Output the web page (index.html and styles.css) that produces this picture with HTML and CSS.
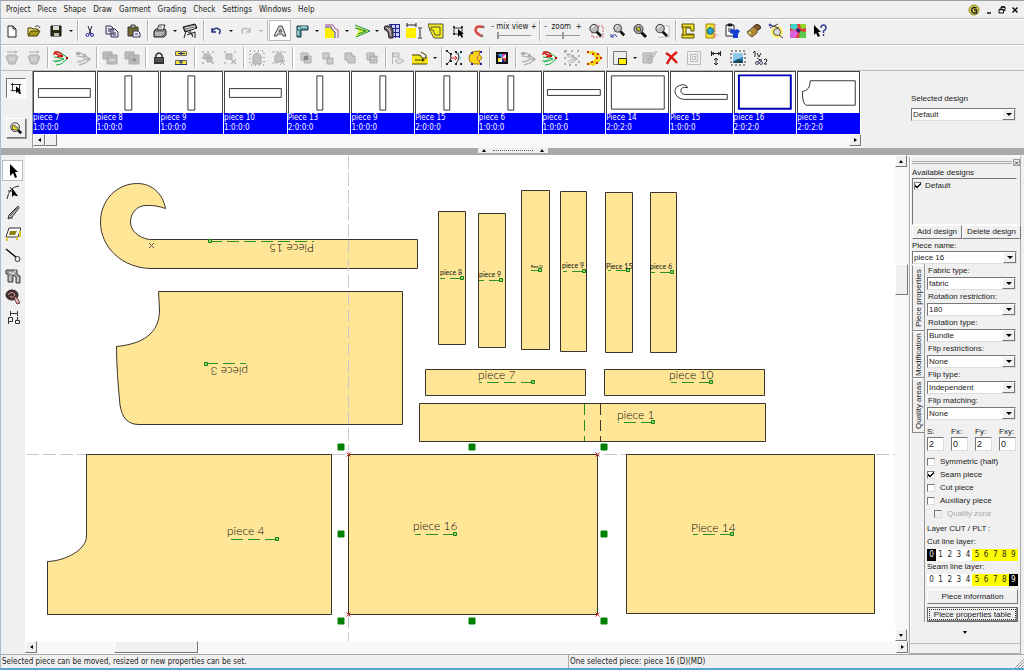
FILE: index.html
```html
<!DOCTYPE html>
<html lang="en">
<head>
<meta charset="utf-8">
<title>Pattern design</title>
<link rel="stylesheet" href="styles.css">
</head>
<body>
<svg class="defs" aria-hidden="true">
  <symbol id="lens" viewBox="0 0 16 16"><path d="M9 9l5 5" stroke="#111" stroke-width="3"/><circle cx="6.500" cy="6" r="4.500" fill="#bbb" stroke="#333"/><path d="M4 6q0-3 3-3" stroke="#fff" fill="none"/></symbol>
  <symbol id="digit" viewBox="0 0 16 16"><path d="M1 3h5l4 3 5 3-5 4-6 2M2 6l6 1 3 2-4 2-5 1" fill="none" stroke="#b8b8b8" stroke-width="1.500"/><path d="M1 2h4v3H1zM8 4h3v3H8zM12 8h3v3h-3z" fill="#b0b0b0"/></symbol>
  <symbol id="jar" viewBox="0 0 16 16"><path d="M4 5h8l2 2-1 2-2 5H5L3 9 2 7z" fill="#c4c4c4" stroke="#b0b0b0"/><path d="M3 2h9M11 1l2 1-2 1" fill="none" stroke="#aaa"/><path d="M5 8h6M5 10h6" stroke="#ddd"/></symbol>
  <symbol id="flow" viewBox="0 0 16 16"><path d="M1 2l7 1 7 5-7 6-5 1M1 7l6 1 4 1-5 2-6 0M2 12l5-2" fill="none" stroke="#18b040"/><path d="M1 5q0-4 4-3t3 4l-4 1M2 3l7 4" fill="none" stroke="#d22" stroke-width="1.500"/><path d="M8 5h2v2H8zM13 7h2v2h-2z" fill="#b00"/></symbol>
</svg>
<div class="app">
  <header class="menubar">
    <nav class="menu">
      <button>Project</button><button>Piece</button><button>Shape</button><button>Draw</button><button>Garment</button><button>Grading</button><button>Check</button><button>Settings</button><button>Windows</button><button>Help</button>
    </nav>
    <div class="window-buttons">
      <svg viewBox="0 0 12 12" width="12" height="12"><circle cx="6" cy="6" r="5" fill="#d9d04a" stroke="#8d8825"/><path d="M8.500 4Q5 2.500 3.800 5q-.5 4 2.200 4h2.500V6H6" fill="none" stroke="#222" stroke-width="1.500"/></svg>
      <button aria-label="Minimize"><svg viewBox="0 0 8 8" width="8" height="8"><path d="M2 7h4" stroke="#111" stroke-width="1.500"/></svg></button>
      <button aria-label="Restore"><svg viewBox="0 0 8 8" width="8" height="8"><path d="M3 3V1h4v3.500H5.500M1 3.500h4.500V7H1z" fill="none" stroke="#111"/><path d="M3 1h4M1 3.500h4.500" stroke="#111" stroke-width="1.500"/></svg></button>
      <button aria-label="Close"><svg viewBox="0 0 8 8" width="8" height="8"><path d="M1.500 1.500l5 5m0-5l-5 5" stroke="#111" stroke-width="1.500"/></svg></button>
    </div>
  </header>

  <div class="toolbar" role="toolbar" aria-label="Main">
    <button class="tool" aria-label="New"><svg viewBox="0 0 16 16"><path d="M4 3h5l3 3v8H4z" fill="#fff" stroke="#222"/><path d="M9 3v3h3" fill="none" stroke="#222"/></svg></button>
    <button class="tool" aria-label="Open"><svg viewBox="0 0 16 16"><path d="M2 12V5h4l1 1h5v2" fill="#e8d870" stroke="#443c00"/><path d="M2 13l3-5h9l-3 5z" fill="#a89a20" stroke="#443c00"/><path d="M9 4q3-3 5 1" fill="none" stroke="#333"/></svg></button>
    <button class="tool" aria-label="Save"><svg viewBox="0 0 16 16"><path d="M3 3h10v10H3z" fill="#2d2d10" stroke="#111"/><path d="M5 3h6v4H5z" fill="#ddd"/><path d="M6 10h5v3H6z" fill="#bbb"/></svg></button>
    <button class="caret" aria-label="Save options"></button><i class="sep"></i>
    <button class="tool" aria-label="Cut"><svg viewBox="0 0 16 16"><path d="M6 3l3 8M10 3l-3 8" stroke="#223" fill="none"/><circle cx="5.500" cy="12" r="1.500" fill="none" stroke="#22a" /><circle cx="10" cy="12" r="1.500" fill="none" stroke="#22a"/></svg></button>
    <button class="tool" aria-label="Copy"><svg viewBox="0 0 16 16"><path d="M2 3h5l2 2v6H2zM7 6h4l3 3v5H7z" fill="#e4e4f4" stroke="#335"/><path d="M4 6h3M4 8h3M9 10h3M9 12h3" stroke="#335"/></svg></button>
    <button class="tool" aria-label="Paste"><svg viewBox="0 0 16 16"><path d="M2 4h10v9H2z" fill="#736b2b" stroke="#333"/><path d="M5 2h4v3H5z" fill="#bbb" stroke="#333"/><path d="M7 8h5l2 2v4H7z" fill="#e8e8ff" stroke="#335"/><path d="M9 11h3" stroke="#335"/></svg></button>
    <i class="sep"></i>
    <button class="tool" aria-label="Print"><svg viewBox="0 0 16 16"><path d="M2 8l2-2h9l1 2v4l-2 2H2z" fill="#888" stroke="#222"/><path d="M5 7l2-5h6l-2 5z" fill="#fff" stroke="#333"/><path d="M3 10h9M3 12h7" stroke="#ddd"/><path d="M7 4h3M6 6h4" stroke="#888"/></svg></button>
    <button class="caret" aria-label="Print options"></button>
    <button class="tool" aria-label="Plot"><svg viewBox="0 0 16 16"><path d="M1 4l12-3 2 4-12 4z" fill="#777" stroke="#111"/><path d="M4 8l-2 7M5 12l8-3v6M8 8l3 6M6 9l5 3" stroke="#222" fill="none"/><path d="M3 5l10-2M4 7l9-2" stroke="#ddd"/></svg></button>
    <i class="sep"></i>
    <button class="tool" aria-label="Undo"><svg viewBox="0 0 16 16"><path d="M4 5v4h4M4 8q4-5 8-1 1 2-1 4" fill="none" stroke="#22347e" stroke-width="1.500"/></svg></button>
    <button class="caret" aria-label="Undo list"></button>
    <button class="tool" aria-label="Redo" disabled><svg viewBox="0 0 16 16"><path d="M12 5v4H8M12 8Q8 3 4 7q-1 2 1 4" fill="none" stroke="#bbb" stroke-width="1.500"/></svg></button>
    <button class="caret dim" aria-label="Redo list" disabled></button><i class="sep"></i>
    <button class="tool pressed" aria-label="Text"><svg viewBox="0 0 16 16"><path d="M2 13L7 3h3l4 10h-3l-1-2H6l-1 2zM7 9h2.500L8.500 6z" fill="#d8d8d8" stroke="#444"/></svg></button>
    <button class="tool" aria-label="Ruler"><svg viewBox="0 0 16 16"><path d="M3 3h11v4H7v7H3z" fill="#5c9c98" stroke="#134"/><path d="M5 4v2M8 3v2M10 3v2M12 3v2M3 9h2M3 11h2" stroke="#dff"/></svg></button>
    <button class="caret" aria-label="Ruler options"></button>
    <button class="tool" aria-label="Seam"><svg viewBox="0 0 16 16"><path d="M1 5h6l3 4v6H1z" fill="#ffee00"/><path d="M1 2h8q1 4 5 5v8" fill="none" stroke="#a24a90"/><path d="M1 4h6q1 4 4 5v6" fill="none" stroke="#447"/></svg></button>
    <button class="caret" aria-label="Seam options"></button>
    <button class="tool" aria-label="Grade"><svg viewBox="0 0 16 16"><path d="M1 3l14 5-14 6 4-6z" fill="#d9ef20"/><path d="M1 2l15 6-14 6M1 5l11 3-8 3" fill="none" stroke="#198c48"/></svg></button>
    <button class="caret" aria-label="Grade options"></button>
    <button class="tool" aria-label="Grid"><svg viewBox="0 0 16 16"><path d="M5 1h11v14H5z" fill="#ccd0ff"/><path d="M5 1.500h11M5 5.500h11M5 9.500h11M5 13.500h11M7.500 1v14M11.500 1v14M15.500 1v14" stroke="#24248c"/><path d="M1 3h6l2 4v8H5L4 9 0 6z" fill="#685c70" stroke="#222"/><path d="M2 4l5 5M5 5l2 8" stroke="#d8c8b8"/></svg></button>
    <button class="tool" aria-label="Dimensions"><svg viewBox="0 0 16 16"><path d="M0 5h10v10H0z" fill="#ffee00"/><path d="M1 0v4M10 0v4M1 2h9M12 5h4M12 15h4M14 6v8" stroke="#222"/></svg></button>
    <button class="tool" aria-label="Shape"><svg viewBox="0 0 16 16"><path d="M0 1h15v14H6L2 8z" fill="#f3ed19" stroke="#554"/><path d="M3 4h9v8H7L5 7H3z" fill="none" stroke="#554"/></svg></button>
    <button class="tool" aria-label="Select"><svg viewBox="0 0 16 16"><path d="M4 5h8v6H4z" fill="none" stroke="#333"/><path d="M3 4h2M11 4h2M3 11h2" stroke="#333" stroke-width="2"/><path d="M8 6v8l2-2 2 3 1-1-1-3h2z" fill="#000"/></svg></button>
    <button class="tool" aria-label="Snap"><svg viewBox="0 0 16 16"><path d="M11 4Q4 2 3.500 7q0 3 6 6" fill="none" stroke="#d8463b" stroke-width="2.500"/><path d="M11 3l1 2M9 14l2-2" stroke="#777" stroke-width="2"/></svg></button>
    <div class="slider mix"><label for="mix">- mix view +</label><input id="mix" type="range" min="0" max="10" value="0"></div>
    <i class="sep"></i>
    <div class="slider zoomer"><label for="zoom">-&nbsp; zoom &nbsp;+</label><input id="zoom" type="range" min="0" max="10" value="5"></div>
    <button class="tool" aria-label="Zoom area"><svg viewBox="0 0 16 16"><path d="M4 3h11v11H4z" fill="none" stroke="#c66" stroke-dasharray="2 1"/><use href="#lens" width="15" height="15"/></svg></button>
    <button class="tool" aria-label="Zoom previous"><svg viewBox="0 0 16 16"><use href="#lens" x="2" width="14" height="14"/><path d="M1 11v3h3M2 13q3-3 5 1" fill="none" stroke="#2b36a0"/></svg></button>
    <button class="tool" aria-label="Zoom piece"><svg viewBox="0 0 16 16"><use href="#lens" width="16" height="16"/><path d="M4 4h4l1 4H5z" fill="#c5c020" stroke="#444"/></svg></button>
    <button class="tool" aria-label="Zoom page"><svg viewBox="0 0 16 16"><path d="M5 3h10v11H4" fill="#fff" stroke="#bbb"/><use href="#lens" width="15" height="15"/></svg></button>
    <i class="sep"></i>
    <button class="tool" aria-label="Machine"><svg viewBox="0 0 16 16"><path d="M2 1h12v7h-3V5H6v6h8v4H2v-4h1V5H2z" fill="#f5e52c" stroke="#554800"/><path d="M2 4h9M3 12h10" stroke="#554800"/></svg></button>
    <button class="tool" aria-label="Mirror"><svg viewBox="0 0 16 16"><path d="M4 1h8v14H4z" fill="#f4e242" stroke="#a80"/><path d="M8 4l-3 3 1 4h4l2-4z" fill="#25a4d0" stroke="#167"/><path d="M13 1v14M9 12h7" stroke="#d75" stroke-dasharray="2 1"/></svg></button>
    <button class="tool" aria-label="Garment list"><svg viewBox="0 0 16 16"><path d="M2 2h8v11H2z" fill="#fff" stroke="#223"/><path d="M4 1h4v2H4zM4 6h4M4 8h4" stroke="#223"/><path d="M6 7l3-1 2 1 2-1 3 2-2 3v4H9v-4l-3-1z" fill="#1740d0"/></svg></button>
    <button class="tool" aria-label="Bell"><svg viewBox="0 0 16 16"><path d="M7 4q3-4 6-2 3 2 1 4-3 2-6 2z" fill="#815424" stroke="#432"/><path d="M7 4q5 1 4 6l-5 4q-3-1-5-5z" fill="#b88a30" stroke="#654"/><circle cx="4" cy="10" r="2" fill="#e8d850" stroke="#875"/></svg></button>
    <button class="tool" aria-label="Check cut"><svg viewBox="0 0 16 16"><circle cx="9" cy="9" r="6" fill="#fff36a"/><path d="M2 2l9 3M2 5l8-4M11 12l4 3" stroke="#445"/><circle cx="2" cy="2" r="1" fill="none" stroke="#22a"/><circle cx="9" cy="9" r="3.500" fill="#ddd" stroke="#555"/></svg></button>
    <button class="tool" aria-label="Marker"><svg viewBox="0 0 16 16"><path d="M0 1h16v14H0z" fill="#e93a34"/><path d="M1 1h6l1 4-4 2-4-2z" fill="#3bd4c8"/><path d="M10 1h6v4l-5 1z" fill="#8ed630"/><path d="M0 8l6-1 2 4-3 4H0z" fill="#d764dc"/><path d="M10 8l6 1v6H9z" fill="#59c94c"/><path d="M7 5l4 2-2 3-3-2z" fill="#302080"/></svg></button>
    <button class="tool" aria-label="Context help"><svg viewBox="0 0 16 16"><path d="M2 2v10l2-2 2 4 2-1-2-4h3z" fill="#000"/><path d="M9 5q0-3 2.500-3T14 5q0 2-2.500 3v2M11.500 11v2" fill="none" stroke="#343d96" stroke-width="1.500"/></svg></button>
  </div>

  <div class="toolbar second" role="toolbar" aria-label="Pieces">
    <button class="tool" aria-label="Bin left" disabled><svg><use href="#jar"/></svg></button>
    <button class="tool" aria-label="Bin right" disabled><svg><use href="#jar"/></svg></button><i class="sep wide"></i>
    <button class="tool" aria-label="Order"><svg><use href="#flow"/></svg></button>
    <button class="tool" aria-label="Reorder" disabled><svg><use href="#digit"/></svg></button><i class="sep wide"></i>
    <button class="tool" aria-label="Width" disabled><svg viewBox="0 0 16 16"><path d="M1 2h9v7H1zM5 5h10v9H5z" fill="#bbb" stroke="#aaa"/><path d="M7 10h6" stroke="#eee"/></svg></button>
    <button class="tool" aria-label="Move" disabled><svg viewBox="0 0 16 16"><path d="M1 2h9v7H1zM5 5h10v9H5z" fill="#bbb" stroke="#aaa"/><path d="M7 10h5M10 8l2 2-2 2" stroke="#888" fill="none"/></svg></button><i class="sep wide"></i>
    <button class="tool" aria-label="Lock"><svg viewBox="0 0 16 16"><path d="M5 8V5q3-4 6 0v3" fill="none" stroke="#333" stroke-width="1.500"/><path d="M3 7h10v7H3z" fill="#333"/><path d="M4 9h8M4 11h8" stroke="#777"/></svg></button>
    <button class="tool" aria-label="Distribute"><svg viewBox="0 0 16 16"><path d="M2.500 1.500h5v4h-5zM8.500 1.500h5v4h-5zM2.500 10.500h11v4h-11z" fill="#f8e736" stroke="#666"/><path d="M5 3.500h7M8 10v4M6 12h4" stroke="#22308a"/><path d="M2 14.500h12" stroke="#22308a"/></svg></button><i class="sep wide"></i>
    <button class="tool" aria-label="Group" disabled><svg viewBox="0 0 16 16"><path d="M4 4h6v5H4zM7 7h5v5H7z" fill="#c5c5c5" stroke="#aaa"/><path d="M2 2h2M12 2h2M2 13h2M12 13h2M7 2h2M2 8h2" stroke="#bbb" stroke-width="2"/></svg></button>
    <button class="tool" aria-label="Ungroup" disabled><svg viewBox="0 0 16 16"><path d="M4 4h6v5H4z" fill="#c5c5c5" stroke="#aaa"/><path d="M2 2h2M12 2h2M2 13h2M9 9l5 5M14 9l-5 5" stroke="#b5b5b5" stroke-width="1.500"/></svg></button><i class="sep wide"></i>
    <button class="tool" aria-label="Select all" disabled><svg viewBox="0 0 16 16"><path d="M4 14V6q4-6 8 0v8z" fill="#c2c2c2" stroke="#aaa"/><path d="M1 1h14v14H1z" fill="none" stroke="#aaa" stroke-dasharray="1 3" stroke-width="2"/></svg></button>
    <button class="tool" aria-label="Clear selection" disabled><svg viewBox="0 0 16 16"><path d="M4 12V6q4-6 8 0v6z" fill="#c2c2c2" stroke="#aaa"/><path d="M1 2h14M1 13h6M9 10l5 5M14 10l-5 5" fill="none" stroke="#aaa" stroke-dasharray="3 1"/></svg></button><i class="sep wide"></i>
    <button class="tool" aria-label="Intersect" disabled><svg viewBox="0 0 16 16"><path d="M3 3h7v7H3zM6 6h7v7H6z" fill="#ccc" stroke="#aaa"/><path d="M6 6h4v4H6z" fill="#888"/></svg></button>
    <button class="tool" aria-label="Subtract" disabled><svg viewBox="0 0 16 16"><path d="M3 3h6v6H3zM7 8h6v6H7z" fill="#ccc" stroke="#aaa"/></svg></button>
    <button class="tool" aria-label="Unite" disabled><svg viewBox="0 0 16 16"><path d="M3 3h7v3h3v7H6v-3H3z" fill="#c8c8c8" stroke="#aaa"/></svg></button>
    <button class="tool" aria-label="Exclude" disabled><svg viewBox="0 0 16 16"><path d="M3 3h7v7H3zM6 6h7v7H6z" fill="#c8c8c8" stroke="#aaa"/><path d="M7 7h3v3H7z" fill="#f0f0f0" stroke="#aaa"/></svg></button><i class="sep"></i>
    <button class="tool" aria-label="Align" disabled><svg viewBox="0 0 16 16"><path d="M2.500 2v12M3 3h6v4H3zM5 11l4-3 5 3-5 3z" fill="#ddd" stroke="#b5b5b5"/></svg></button>
    <button class="tool" aria-label="Walk pieces"><svg viewBox="0 0 16 16"><path d="M0 5h8l2 3h6v6H0z" fill="#f6e51a"/><path d="M0 5h8l2 3h5M0 14h15M3 10h9M9 2l5 3v3" fill="none" stroke="#443e00"/><path d="M10 8l3 2-3 2" fill="#443e00"/></svg></button>
    <button class="caret" aria-label="Walk options"></button><i class="sep"></i>
    <button class="tool" aria-label="Join"><svg viewBox="0 0 16 16"><path d="M1 1q5 3 4 7t-4 6M9 2q5 2 4 6t-4 6" fill="none" stroke="#222"/><path d="M5 8h6M9 6l2 2-2 2" fill="none" stroke="#d22"/><path d="M0 1h2M4 4h2M4 11h2M0 14h2M9 2h2M9 14h2M14 2h2M14 14h2" stroke="#223" stroke-width="2"/><path d="M12 3h3M13 8h2" stroke="#4bb"/></svg></button>
    <button class="tool" aria-label="Split"><svg viewBox="0 0 16 16"><path d="M4 2l8-1-1 3 3 4-3 3 2 3-9 0q-6-6 0-12z" fill="#f8d416" stroke="#a47500"/><path d="M12 4q-6 4 0 8" fill="none" stroke="#c66"/><path d="M12 1h2v2h-2zM3 2h2v2H3zM3 13h2v2H3zM12 13h2v2h-2z" fill="#22a"/></svg></button><i class="sep"></i>
    <button class="tool" aria-label="Colors"><svg viewBox="0 0 16 16"><path d="M3 3h10v10H3z" fill="#eee" stroke="#111" stroke-width="2"/><path d="M4 4h4v4z" fill="#23b5dd"/><path d="M8 4h4L8 8z" fill="#e23ac8"/><path d="M4 8l4 0-4 4z" fill="#eee620"/><path d="M12 8v4L8 8z" fill="#e33"/><path d="M4 4l4 4H4zM8 8v4h4z" fill="#222a80"/></svg></button><i class="sep"></i>
    <button class="tool" aria-label="Copy rules" disabled><svg><use href="#digit"/></svg></button>
    <button class="tool" aria-label="Paste rules"><svg><use href="#flow"/></svg></button>
    <button class="tool" aria-label="Edit rules" disabled><svg viewBox="0 0 16 16"><use href="#digit" x="2" y="2" width="12" height="12"/><path d="M1 1h14v14H1z" fill="none" stroke="#aaa" stroke-dasharray="2 4" stroke-width="2"/></svg></button>
    <button class="tool" aria-label="Apply rules"><svg viewBox="0 0 16 16"><path d="M1 2l6 1 4 5-4 5-6 1M6 2l5 2 4 4-5 5-4 2" fill="none" stroke="#eed80b" stroke-width="2.500"/><path d="M1 2h2M6 4h2M10 8h2M5 12h2M1 14h2M11 4h2M14 8h2M10 13h2" stroke="#d32a18" stroke-width="2"/></svg></button><i class="sep"></i>
    <button class="tool" aria-label="Piece color"><svg viewBox="0 0 16 16"><path d="M1.500 1.500h13v13h-13z" fill="#eee" stroke="#777"/><path d="M6.500 8.500h8v6h-8z" fill="#ffee00" stroke="#333"/></svg></button>
    <button class="caret" aria-label="Color options"></button>
    <button class="tool" aria-label="Edit piece" disabled><svg viewBox="0 0 16 16"><path d="M1 3h9v10H1zM15 1L7 14M13 1L5 12" fill="#ccc" stroke="#aaa"/><path d="M3 6h6M3 9h5" stroke="#aaa"/></svg></button>
    <button class="tool" aria-label="Delete"><svg viewBox="0 0 16 16"><path d="M2 3q5 3 11 10M13 2Q6 7 3 14" fill="none" stroke="#dc1c14" stroke-width="2.500"/></svg></button>
    <button class="tool" aria-label="Nested" disabled><svg viewBox="0 0 16 16"><path d="M1.500 1.500h13v13h-13zM4.500 4.500h7v7h-7zM6.500 6.500h3v3h-3z" fill="none" stroke="#bbb"/></svg></button>
    <button class="tool" aria-label="Stretch"><svg viewBox="0 0 16 16"><path d="M3.500 1v5M12.500 1v5M4 3.500h8M8 8v7M6 10l2-2 2 2M6 13l2 2 2-2M6 2L4 3.500 6 5M10 2l2 1.500L10 5" fill="none" stroke="#222"/></svg></button>
    <button class="tool" aria-label="Image"><svg viewBox="0 0 16 16"><path d="M1 1h14v14H1z" fill="none" stroke="#333" stroke-dasharray="2 2"/><path d="M3 3h10v10H3z" fill="#2878bc"/><path d="M3 3h10v4L3 11z" fill="#8cc7e8"/><path d="M3 13l5-4 5 2v2z" fill="#154b50"/></svg></button>
    <button class="tool" aria-label="Notches"><svg viewBox="0 0 16 16"><path d="M1 3l2-2v6M5 3l2 4 2-4M12 10q1-2 3 0 0 2-3 4h3" fill="none" stroke="#222"/><path d="M5 8l5 3M5 12l5-3" stroke="#446"/><circle cx="5" cy="13" r="1.500" fill="none" stroke="#446"/><circle cx="9" cy="13" r="1.500" fill="none" stroke="#446"/></svg></button>
  </div>

  <section class="gallery">
    <div class="gallery-tools">
      <button class="square sunken" aria-label="Select pieces"><svg viewBox="0 0 16 16"><path d="M4 4h8v7H4zM2 4h3M4 2v3M11 4h3M2 11h3" fill="none" stroke="#222"/><path d="M8 6v8l2-2 2 3 2-1-2-3h2z" fill="#000"/></svg></button>
      <button class="square raised" aria-label="Find piece"><svg viewBox="0 0 16 16"><path d="M10 10l4 4" stroke="#111" stroke-width="3"/><circle cx="7" cy="7" r="5" fill="#eee" stroke="#222"/><path d="M4 5h3v2h3v3H4z" fill="#eee01a" stroke="#553"/></svg></button>
    </div>
    <div class="strip">
      <div class="cards">
        <button class="card"><svg viewBox="0 0 62 41"><path d="M4.500 16.500h53v9h-53z"/></svg><span>piece 7<br>1:0:0:0</span></button>
        <button class="card"><svg viewBox="0 0 62 41"><path d="M27.500 3.500h7v35h-7z"/></svg><span>piece 8<br>1:0:0:0</span></button>
        <button class="card"><svg viewBox="0 0 62 41"><path d="M27.500 3.500h7v35h-7z"/></svg><span>piece 9<br>1:0:0:0</span></button>
        <button class="card"><svg viewBox="0 0 62 41"><path d="M4.500 16.500h53v9h-53z"/></svg><span>piece 10<br>1:0:0:0</span></button>
        <button class="card"><svg viewBox="0 0 62 41"><path d="M28.500 3.500h6v35h-6z"/></svg><span>Piece 13<br>2:0:0:0</span></button>
        <button class="card"><svg viewBox="0 0 62 41"><path d="M28.500 3.500h6v35h-6z"/></svg><span>piece 9<br>1:0:0:0</span></button>
        <button class="card"><svg viewBox="0 0 62 41"><path d="M28.500 3.500h6v35h-6z"/></svg><span>Piece 15<br>2:0:0:0</span></button>
        <button class="card"><svg viewBox="0 0 62 41"><path d="M28.500 3.500h6v35h-6z"/></svg><span>piece 6<br>1:0:0:0</span></button>
        <button class="card"><svg viewBox="0 0 62 41"><path d="M3.500 17.500h54v6h-54z"/></svg><span>piece 1<br>1:0:0:0</span></button>
        <button class="card"><svg viewBox="0 0 62 41"><path d="M4.500 3.500h54v34h-54z"/></svg><span>Piece 14<br>2:0:2:0</span></button>
        <button class="card"><svg viewBox="0 0 62 41"><path d="M57.500 22.500H15q-5 0-5-4t7-3q-1-3-5-3-8 1-8 7 1 7 9 8h44.500z"/></svg><span>Piece 15<br>1:0:0:0</span></button>
        <button class="card current"><svg viewBox="0 0 62 41"><path d="M4 3h53v34H4z"/></svg><span>piece 16<br>2:0:2:0</span></button>
        <button class="card"><svg viewBox="0 0 62 41"><path d="M12.500 8.500h46v25h-50q-4-1-4-14 8-1 8-11z"/></svg><span>piece 3<br>2:0:2:0</span></button>
      </div>
      <div class="hscroll"><button class="arrow" aria-label="Scroll left"><i class="tri left"></i></button><i class="thumb mini"></i><span class="grow"></span><button class="arrow" aria-label="Scroll right"><i class="tri right"></i></button></div>
    </div>
    <div class="design">
      <label for="design">Selected design</label>
      <span class="combo"><select id="design"><option>Default</option></select></span>
    </div>
  </section>

  <div class="splitter"><span class="grip"><i class="tri up"></i><b></b><i class="tri up"></i></span></div>

  <main class="workspace">
    <div class="palette">
      <button class="ptool on" aria-label="Pointer"><svg viewBox="0 0 16 16"><path d="M5 1v12l3-3 2 5 2-1-2-5h3z" fill="#000"/></svg></button>
      <button class="ptool" aria-label="Edit points"><svg viewBox="0 0 16 16"><path d="M2 15Q4 3 14 2M3 7h5M5 3l3 4" fill="none" stroke="#333"/><path d="M7 4v9l2-2 2 1h2z" fill="#000"/></svg></button>
      <button class="ptool" aria-label="Draw"><svg viewBox="0 0 16 16"><path d="M13 1l1 2-7 9-4 2 1-4z" fill="#ccc" stroke="#333"/><path d="M12 3l-7 8M3 13h5" stroke="#444"/></svg></button>
      <button class="ptool" aria-label="Table"><svg viewBox="0 0 16 16"><path d="M4 2h12l-3 9H1z" fill="#fff" stroke="#333"/><path d="M5 5h7l-2 4H4z" fill="#8c830f"/><path d="M2 11v4M12 11v3M15 5v6" stroke="#d9cf30" stroke-width="2"/></svg></button>
      <button class="ptool" aria-label="Pin"><svg viewBox="0 0 16 16"><path d="M1 2l11 9" stroke="#111" stroke-width="1.500"/><circle cx="12.500" cy="12" r="2.500" fill="#eee" stroke="#333"/></svg></button>
      <button class="ptool" aria-label="Pattern"><svg viewBox="0 0 16 16"><path d="M1 2h11v4l3 2v7h-4V9L8 7v7H3V6H1z" fill="#9a9a9a" stroke="#444"/><path d="M4 4l5 2M8 6l3-4M5 8v5M13 9v5" stroke="#eee"/></svg></button>
      <button class="ptool" aria-label="Tape"><svg viewBox="0 0 16 16"><ellipse cx="7" cy="6" rx="6" ry="5" fill="#4a3033" stroke="#222"/><path d="M3 6q4-5 7 0-3 4-5 1" fill="none" stroke="#daa"/><path d="M9 7l3 2 3 5-3 1-2-4z" fill="#e6c0c0" stroke="#633"/></svg></button>
      <button class="ptool" aria-label="Measure"><svg viewBox="0 0 16 16"><path d="M5.500 1v5M12.500 1v5M6 3.500h6M3.500 7.500h4v4h-4zM3.500 8v6M12.500 7v4M10.500 10.500h4v3h-4z" fill="none" stroke="#333"/></svg></button>
    </div>
    <div class="sheet">
      <svg class="drawing" width="870" height="486" viewBox="25 155 870 486">
        <path class="guide" d="M26 454.500H895"/>
        <g class="piece">
          <path d="M417.500 239.500H149.500C139 238 130.500 231 130.500 222C130.500 212 138 205.500 146 205.500C153 205 160 206.500 165.500 208.500C163 194 152 183.500 137.500 183.500C117 183.500 100.500 200 100.500 222C100.500 247 122 268.500 152 268.500H417.500Z"/>
          <path d="M158.500 291.500H402.500V424.500H139C128 424.500 122 418 120 405C118 385 116.500 365 116.500 346.500C142 344 159.500 334 159.500 310Z"/>
          <path d="M86.500 454.500H331.500V614.500H47.500V561.500C65 561 86.500 550 86.500 536Z"/>
          <path d="M626.500 454.500H874.500V613.500H626.500Z"/>
          <path d="M438.500 211.500H465.500V344.500H438.500Z"/>
          <path d="M478.500 213.500H505.500V347.500H478.500Z"/>
          <path d="M521.500 190.500H549.500V349.500H521.500Z"/>
          <path d="M560.500 191.500H586.500V351.500H560.500Z"/>
          <path d="M605.500 192.500H632.500V352.500H605.500Z"/>
          <path d="M650.500 192.500H676.500V352.500H650.500Z"/>
          <path d="M425.500 369.500H585.500V395.500H425.500Z"/>
          <path d="M604.500 369.500H764.500V395.500H604.500Z"/>
          <path d="M419.500 403.500H765.500V441.500H419.500Z"/>
        </g>
        <path class="guide" d="M348.500 156V641"/>
        <g class="piece"><path d="M348.500 454.500H597.500V614.500H348.500Z"/></g>
        <path class="notch green" d="M584.500 404V441"/>
        <path class="notch" d="M600.500 404V441"/>
        <g class="grain">
          <path d="M210 241.500H314"/><path d="M206 363.500H246"/>
          <path d="M277 539.500H230"/><path d="M455 534.500H415"/><path d="M732 534.500H693"/>
          <path d="M462 278.500H440"/><path d="M501 280.500H479"/><path d="M540 270.500H531"/><path d="M584 271.500H563"/><path d="M628 270.500H608"/><path d="M672 272.500H651"/>
          <path d="M533 382.500H479"/><path d="M711 382.500H671"/><path d="M653 422.500H618"/>
        </g>
        <g class="ends">
          <path d="M208.500 239.500h3v3h-3zM204.500 362.500h3v3h-3zM275.500 537.500h3v3h-3zM453.500 532.500h3v3h-3zM730.500 532.500h3v3h-3zM460.500 276.500h3v3h-3zM499.500 278.500h3v3h-3zM538.500 268.500h3v3h-3zM582.500 269.500h3v3h-3zM626.500 268.500h3v3h-3zM670.500 270.500h3v3h-3zM531.500 380.500h3v3h-3zM709.500 380.500h3v3h-3zM651.500 420.500h3v3h-3z"/>
        </g>
        <g class="name">
          <text transform="translate(314 244) rotate(180)">Piece 15</text>
          <text transform="translate(248 367) rotate(180)">piece 3</text>
          <text x="227" y="535">piece 4</text>
          <text x="413" y="530">piece 16</text>
          <text x="691" y="532">Piece 14</text>
          <text x="478" y="379">piece 7</text>
          <text x="669" y="379">piece 10</text>
          <text x="617" y="419">piece 1</text>
        </g>
        <g class="name small">
          <text x="440" y="275">piece 8</text>
          <text x="479" y="277">piece 9</text>
          <text x="562" y="268">piece 9</text>
          <text x="606" y="269">Piece 15</text>
          <text x="650" y="269">piece 6</text>
          <text class="micro" x="531" y="268">Piece 13</text>
        </g>
        <path class="anchor" d="M149 243l5 5m0-5l-5 5"/>
        <path class="corner" d="M346.500 452.500l4 4m0-4l-4 4M595.500 452.500l4 4m0-4l-4 4M346.500 612.500l4 4m0-4l-4 4M595.500 612.500l4 4m0-4l-4 4"/>
        <path class="handles" d="M338 444h6v6h-6zM469 444h6v6h-6zM601 444h6v6h-6zM338 531h6v6h-6zM601 531h6v6h-6zM338 618h6v6h-6zM469 618h6v6h-6zM601 618h6v6h-6z"/>
      </svg>
    </div>
    <div class="vscroll"><button class="arrow" aria-label="Scroll up"><i class="tri up"></i></button><span class="pre"></span><i class="thumb tall"></i><span class="grow"></span><button class="arrow" aria-label="Scroll down"><i class="tri down"></i></button></div>
    <div class="hscroll wide"><button class="arrow" aria-label="Scroll sheet left"><i class="tri left"></i></button><span class="lead"></span><i class="thumb long"></i><span class="grow"></span><button class="arrow" aria-label="Scroll sheet right"><i class="tri right"></i></button></div>

    <aside class="panel">
      <div class="panel-head"><i></i><button aria-label="Close panel"><svg viewBox="0 0 6 6" width="6" height="6"><path d="M1 1l4 4m0-4L1 5" stroke="#333"/></svg></button></div>
      <div class="panel-top">
        <div class="caption">Available designs</div>
        <div class="list"><label class="check"><input type="checkbox" checked>Default</label></div>
        <div class="pair"><button class="push">Add design</button><button class="push">Delete design</button></div>
        <label class="caption" for="pname">Piece name:</label>
        <span class="combo"><select id="pname"><option>piece 16</option></select></span>
      </div>
      <div class="tabbed">
        <div class="tabs"><button class="tab first">Piece properties</button><button class="tab second-tab">Modification</button><button class="tab third">Quality areas</button></div>
        <form class="props">
          <label for="fabric">Fabric type:</label><span class="combo"><select id="fabric"><option>fabric</option></select></span>
          <label for="rotr">Rotation restriction:</label><span class="combo"><select id="rotr"><option>180</option></select></span>
          <label for="rott">Rotation type:</label><span class="combo"><select id="rott"><option>Bundle</option></select></span>
          <label for="flipr">Flip restrictions:</label><span class="combo"><select id="flipr"><option>None</option></select></span>
          <label for="flipt">Flip type:</label><span class="combo"><select id="flipt"><option>Independent</option></select></span>
          <label for="flipm">Flip matching:</label><span class="combo"><select id="flipm"><option>None</option></select></span>
          <div class="counts">
            <label>S:<input value="2"></label><label>Fx:<input value="0"></label><label>Fy:<input value="2"></label><label>Fxy:<input value="0"></label>
          </div>
          <label class="check"><input type="checkbox">Symmetric (half)</label>
          <label class="check"><input type="checkbox" checked>Seam piece</label>
          <label class="check"><input type="checkbox">Cut piece</label>
          <label class="check"><input type="checkbox">Auxiliary piece</label>
          <label class="check nested"><input type="checkbox" disabled>Quality zone</label>
          <div class="caption layers">Layer CUT / PLT :</div>
          <div class="caption">Cut line layer:</div>
          <div class="digits"><button type="button" class="sel">0</button><button type="button">1</button><button type="button">2</button><button type="button">3</button><button type="button">4</button><button type="button" class="y">5</button><button type="button" class="y">6</button><button type="button" class="y">7</button><button type="button" class="y">8</button><button type="button" class="y">9</button></div>
          <div class="caption">Seam line layer:</div>
          <div class="digits"><button type="button">0</button><button type="button">1</button><button type="button">2</button><button type="button">3</button><button type="button">4</button><button type="button" class="y">5</button><button type="button" class="y">6</button><button type="button" class="y">7</button><button type="button" class="y">8</button><button type="button" class="sel">9</button></div>
          <button type="button" class="push block">Piece information</button>
          <button type="button" class="push block focus">Piece properties table</button>
        </form>
      </div>
      <div class="more"><i class="tri down"></i></div>
    </aside>
  </main>

  <footer class="status"><span class="hint">Selected piece can be moved, resized or new properties can be set.</span><span class="info">One selected piece: piece 16 (D)(MD)</span><svg viewBox="0 0 10 10" width="10" height="10"><path d="M1 10l9-9M4 10l6-6M7 10l3-3" stroke="#999"/></svg></footer>
</div>
</body>
</html>
```
FILE: styles.css
```css
* { box-sizing: border-box; }
body { margin: 0; font: 8px/12px "Liberation Sans", sans-serif; color: #222; background: #f0f0f0; }
button { margin: 0; padding: 0; border: 0; background: none; font: inherit; color: inherit; }
.defs { position: absolute; width: 0; height: 0; }
.app { min-height: 100vh; display: flex; flex-direction: column; border-top: 1px solid #9aa0a8; border-left: 1px solid #a9bccb; border-bottom: 2px solid #5aa5d5; }
.menubar, .toolbar, .cards span, .status { font-family: "DejaVu Sans Condensed", "Open Sans", sans-serif; }

.menubar { display: flex; justify-content: space-between; height: 17px; padding: 0 5px; }
.menu { display: flex; align-items: center; gap: 7px; }
.window-buttons { display: flex; align-items: center; gap: 5px; }
.window-buttons button { display: flex; }

.toolbar { display: flex; align-items: center; height: 26px; border-top: 1px solid #bdbdbd; box-shadow: inset 0 1px #fff; padding-bottom: 2px; }
.toolbar.second { height: 26px; padding-bottom: 0; }
.tool { flex: none; width: 22px; height: 21px; display: flex; align-items: center; justify-content: center; }
.tool svg { width: 16px; height: 16px; display: block; }
.tool.pressed { background: #fff; border: 1px solid #bbb; }
.caret { flex: none; width: 8px; height: 20px; display: flex; align-items: center; justify-content: center; }
.caret::before { content: ""; border: 2px solid transparent; border-top-color: #111; border-bottom: 0; }
.caret.dim::before { border-top-color: #aaa; }
.sep { flex: none; width: 4px; height: 21px; background: linear-gradient(90deg, transparent 2px, #b5b5b5 2px, #b5b5b5 3px, #fff 3px); }
.sep.wide { width: 5px; }
.slider { flex: none; display: flex; flex-direction: column; align-items: center; line-height: 10px; white-space: nowrap; }
.mix { width: 46px; }
.zoomer { width: 44px; }
.slider input { appearance: none; width: 34px; height: 8px; margin: 0; background: linear-gradient(#999, #999) center / 100% 1px no-repeat; }
.slider input::-webkit-slider-thumb { appearance: none; width: 2px; height: 7px; background: #999; }

.gallery { display: flex; height: 78px; border-top: 1px solid #bbb; }
.gallery-tools { width: 31px; display: flex; flex-direction: column; gap: 20px; padding: 7px 5px; }
.square { width: 20px; height: 20px; display: flex; align-items: center; justify-content: center; }
.square svg { width: 14px; height: 14px; }
.sunken { background: #fafafa; border: 1px solid; border-color: #777 #fff #fff #777; }
.raised { border: 1px solid; border-color: #fff #777 #777 #fff; box-shadow: 1px 1px #999; }
.strip { flex: 1; min-width: 0; background: #f8f8f8; border-left: 1px solid #999; display: flex; flex-direction: column; }
.cards { display: flex; }
.card { flex: 1; min-width: 0; text-align: left; border-right: 1px solid #fff; }
.card svg { display: block; width: 100%; height: 42px; background: #fff; border: 1px solid #444; border-width: 1px 1px 0; fill: none; stroke: #333; }
.card.current path { stroke: #0000b8; stroke-width: 2px; }
.card span { display: block; height: 21px; line-height: 10px; background: #0000ff; color: #fff; }
.design { width: 163px; padding: 22px 8px 0 50px; display: flex; flex-direction: column; }
.design label { height: 15px; }
.splitter { height: 7px; background: #a9a9a9; display: flex; justify-content: center; }
.grip { width: 70px; height: 5px; background: #f0f0f0; display: flex; align-items: center; justify-content: space-between; padding: 0 4px; }
.grip b { width: 40px; border-top: 1px dotted #666; }

.hscroll { display: flex; height: 13px; background: #f8f8f8; }
.vscroll { display: flex; flex-direction: column; background: #f8f8f8; }
.arrow { flex: none; width: 12px; height: 12px; display: flex; align-items: center; justify-content: center; background: #f0f0f0; border: 1px solid; border-color: #fff #777 #777 #fff; }
.thumb { background: #f0f0f0; border: 1px solid; border-color: #fff #777 #777 #fff; }
.thumb.mini { width: 12px; height: 12px; }
.thumb.long { width: 84px; height: 12px; }
.thumb.tall { height: 31px; }
.pre { height: 97px; }
.lead { width: 77px; }
.grow { flex: 1; }
.tri { width: 0; height: 0; border: 2px solid transparent; }
.tri.left { border-right: 3px solid #000; border-left: 0; }
.tri.right { border-left: 3px solid #000; border-right: 0; }
.tri.up { border-bottom: 3px solid #000; border-top: 0; }
.tri.down { border-top: 3px solid #000; border-bottom: 0; }

.workspace { flex: 1; display: grid; grid-template-columns: 24px minmax(0, 1fr) 13px 116px; grid-template-rows: 1fr 13px; }
.palette { grid-row: 1 / 3; padding: 5px 0 0 1px; }
.ptool { width: 21px; height: 21px; display: flex; align-items: center; justify-content: center; }
.ptool svg { width: 16px; height: 16px; }
.ptool.on { background: #fff; border: 1px solid #bbb; }
.sheet { background: #fff; overflow: hidden; }
.hscroll.wide { grid-column: 2 / 4; grid-row: 2; }
.drawing { display: block; }
.guide { stroke: #c9c9c9; stroke-dasharray: 13 4; fill: none; }
.piece { fill: #ffe697; stroke: #3a342c; }
.notch { stroke: #3a342c; stroke-dasharray: 11 5; }
.notch.green { stroke: #1e8c1e; }
.grain { stroke: #2a922a; stroke-dasharray: 12 5; }
.ends { fill: #9fd07a; stroke: #0f820f; }
.name { font: 300 12px Lato, sans-serif; fill: #111; }
.name.small { font-size: 7px; font-weight: 400; }
.name .micro { font-size: 3px; font-weight: 700; }
.anchor { stroke: #655; }
.corner { stroke: #d22; fill: none; }
.handles { fill: #008000; stroke: #008000; stroke-width: 1px; }

.panel { grid-column: 4; grid-row: 1 / 3; display: flex; flex-direction: column; margin: 1px 3px 0 1px; border: 1px solid #aaa; border-top-color: #fff; box-shadow: inset 1px 0 #fff; }
.panel-head { height: 10px; display: flex; align-items: center; padding-left: 2px; gap: 1px; }
.panel-head i { flex: 1; height: 3px; border: 1px solid #aaa; border-width: 1px 0; }
.panel-head button { width: 7px; height: 7px; display: flex; border: 1px solid #999; }
.panel-top { padding: 0 3px 0 2px; display: flex; flex-direction: column; }
.caption { height: 13px; line-height: 12px; white-space: nowrap; }
.panel-top .caption { height: 11px; }
.list { height: 47px; border: 1px solid; border-color: #777 #f0f0f0 #fff #777; padding: 0 1px; }
.pair { display: flex; margin-bottom: 1px; }
.push { height: 14px; padding: 0 4px; border: 1px solid; border-color: #fff #777 #777 #fff; line-height: 12px; white-space: nowrap; }
.pair .push { flex: auto; }
.check { display: flex; align-items: center; gap: 5px; height: 13px; white-space: nowrap; }
.list .check { gap: 3px; }
.check input { appearance: none; flex: none; margin: 0; width: 8px; height: 8px; background: #fff; border: 1px solid; border-color: #777 #ddd #ddd #777; }
.check input:checked::before { content: ""; display: block; width: 6px; height: 6px; background: #000; clip-path: polygon(0 35%, 35% 65%, 100% 0, 100% 35%, 35% 100%, 0 70%); }
.check.nested { margin-left: 7px; color: #aaa; }
.check.nested input { background: #eee; }
.combo { position: relative; display: block; height: 13px; }
.combo select { appearance: none; display: block; width: 100%; height: 100%; margin: 0; padding: 0 12px 0 1px; border: 1px solid; border-color: #777 #ddd #ddd #777; border-radius: 0; background: #fff; font: inherit; line-height: 11px; color: #222; }
.combo::before { content: ""; position: absolute; right: 1px; top: 1px; width: 11px; bottom: 1px; background: #f0f0f0; border: 1px solid; border-color: #fff #777 #777 #fff; pointer-events: none; }
.combo::after { content: ""; position: absolute; right: 4px; top: 5px; border: 3px solid transparent; border-top-color: #000; border-bottom: 0; pointer-events: none; }
.tabbed { display: flex; flex: none; }
.tabs { width: 14px; padding: 1px 0 0 2px; display: flex; flex-direction: column; }
.tab { width: 12px; writing-mode: vertical-rl; transform: rotate(180deg); white-space: nowrap; line-height: 12px; border: 1px solid #888; border-left: 0; border-bottom-color: #fff; }
.first { height: 66px; }
.second-tab { height: 47px; }
.third { height: 55px; }
.props { flex: 1; min-width: 0; display: flex; flex-direction: column; padding: 0 2px; border-left: 1px solid #999; }
.props > label[for] { height: 13px; padding-left: 1px; line-height: 13px; white-space: nowrap; }
.props > .combo { margin-right: 2px; }
.counts { display: flex; justify-content: space-between; margin: 6px 2px 4px 0; }
.counts label { width: 17px; line-height: 11px; }
.counts input { display: block; width: 17px; height: 14px; padding: 0 1px; border: 1px solid; border-color: #777 #ddd #ddd #777; background: #fff; font: inherit; font-size: 9px; color: #222; }
.layers { margin-top: 3px; }
.digits { display: flex; background: #fff; height: 12px; font-family: "DejaVu Sans Condensed", "Open Sans", sans-serif; }
.digits button { flex: 1; line-height: 12px; }
.digits .y { background: #ffff00; }
.digits .sel { background: #000; color: #fff; }
.block { margin-top: 3px; height: 15px; flex: none; }
.block.focus { border-color: #666; outline: 1px dotted #333; outline-offset: -3px; box-shadow: inset -1px -1px #888; }
.more { flex: none; height: 22px; display: flex; align-items: center; justify-content: center; border-bottom: 1px solid #bbb; }

.status { position: relative; display: flex; height: 14px; line-height: 13px; border-top: 1px solid #aaa; }
.status span { padding-left: 1px; white-space: nowrap; }
.hint { flex: 0 0 568px; border-right: 1px solid #aaa; }
.info { flex: 1; }
.status svg { align-self: flex-end; }
```
